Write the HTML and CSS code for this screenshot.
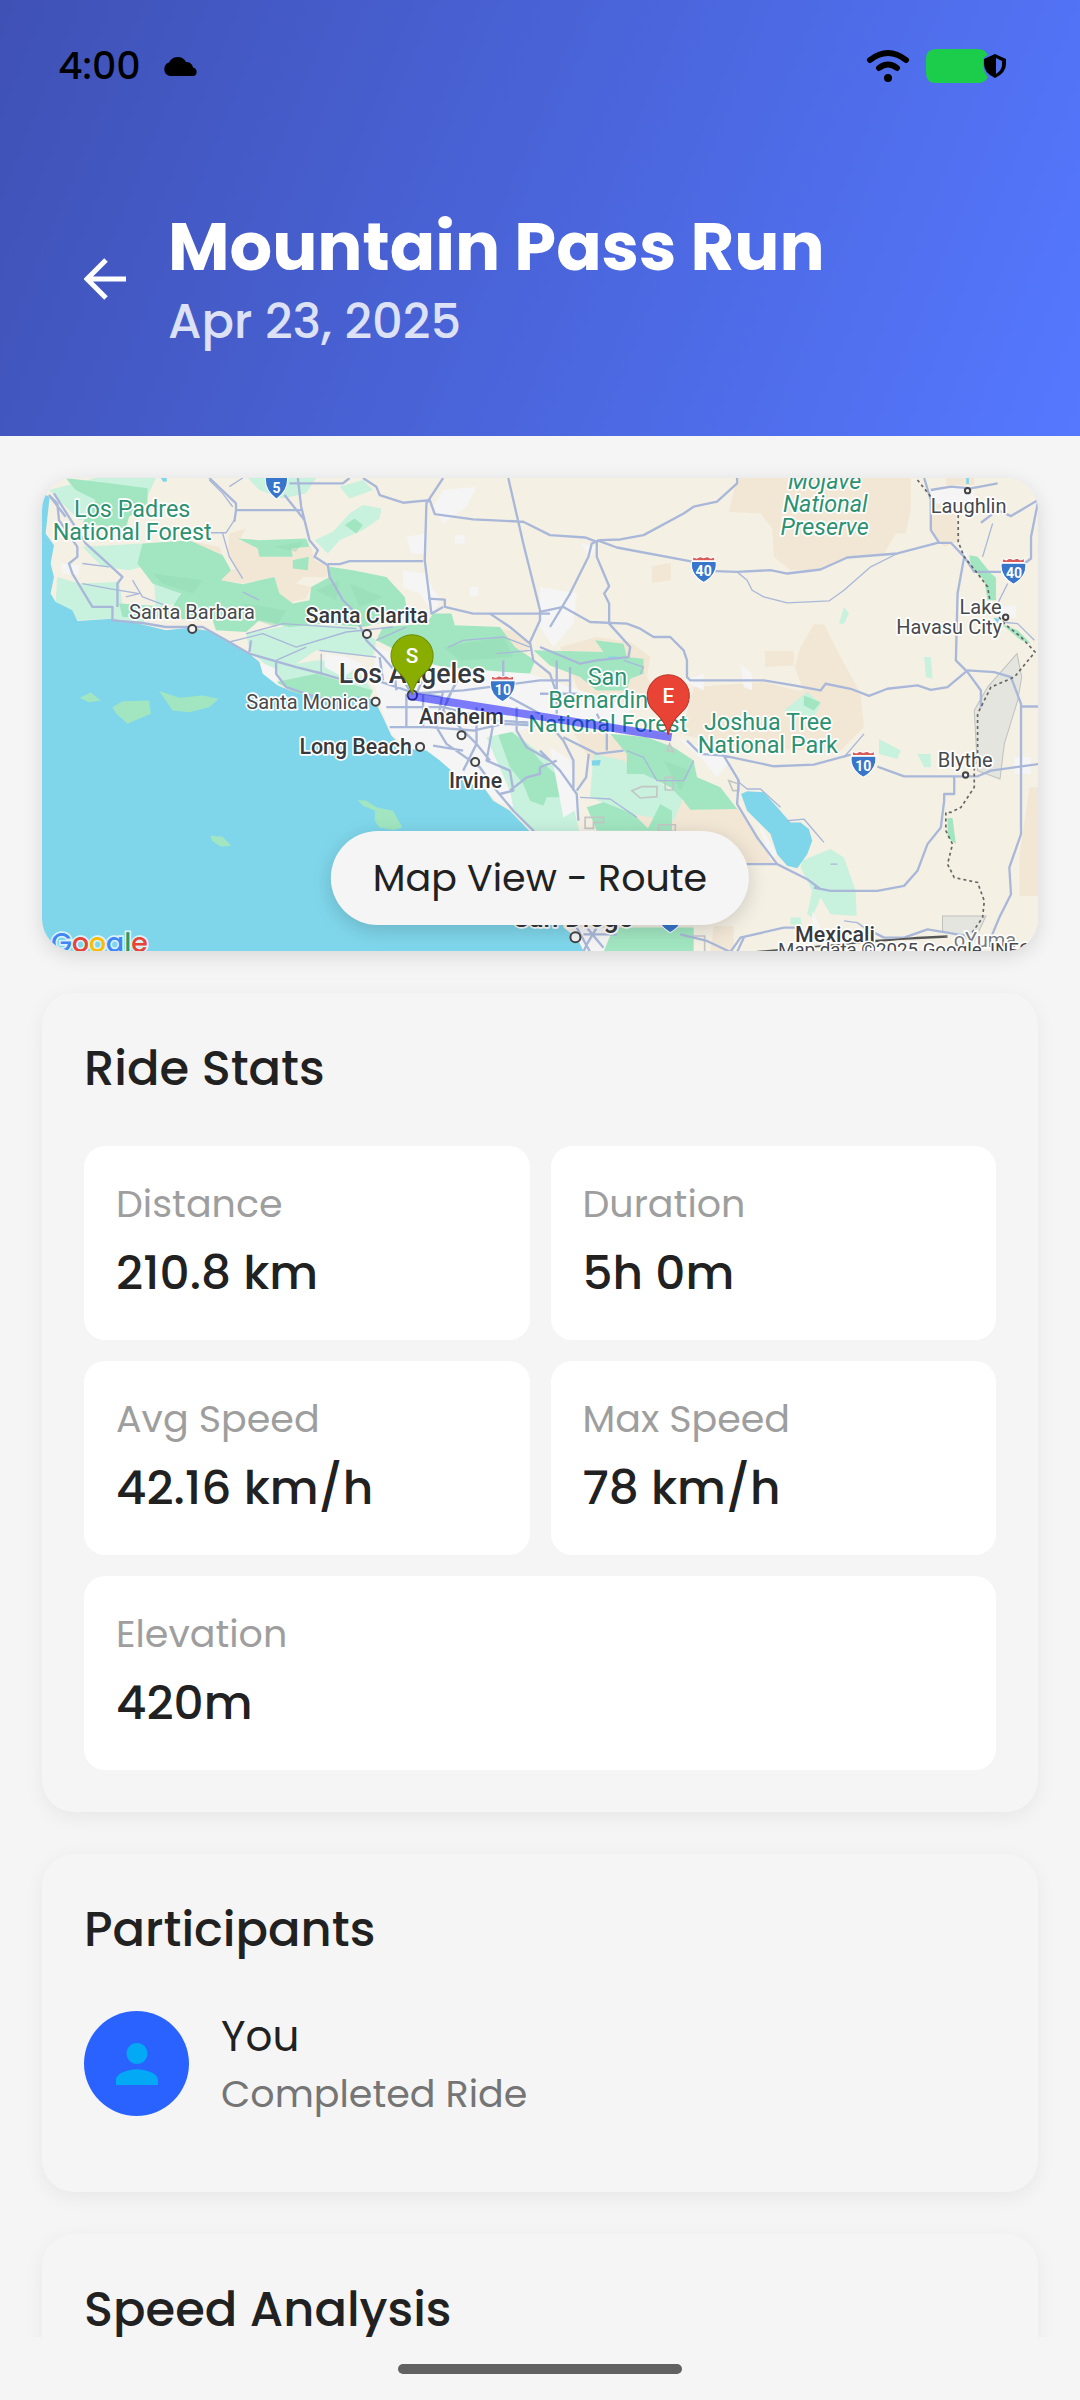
FILE: index.html
```html
<!DOCTYPE html>
<html lang="en">
<head>
<meta charset="utf-8">
<meta name="viewport" content="width=device-width, initial-scale=1">
<title>Mountain Pass Run</title>
<link rel="stylesheet" href="styles.css">
</head>
<body>
<header class="hero">
  <div class="status">
    <div class="status-side">
      <span class="clock">4:00</span>
      <svg class="cloud" viewBox="0 0 36 20" aria-hidden="true"><path d="M7 20a7 7 0 0 1-1-13.500A9.500 9.500 0 0 1 23 6a7 7 0 0 1 7 5.500a4.500 4.500 0 0 1 1 8.500z"/></svg>
    </div>
    <div class="status-side">
      <svg class="wifi" viewBox="0 0 44 34" aria-hidden="true"><path d="M4 11Q22-3 40 11M13 19Q22 12 31 19" fill="none" stroke="#000" stroke-width="6" stroke-linecap="round"/><circle cx="22" cy="29" r="4"/></svg>
      <svg class="battery" viewBox="0 0 82 34" aria-hidden="true"><path d="M10 0H52Q59 0 62 6Q57 8 57 12Q57 23 62 28Q59 34 52 34H10Q0 34 0 24V10Q0 0 10 0Z" fill="#1bcd4b"/><path d="M69 5l11 5v5q0 9-11 14q-11-5-11-14V10z"/><path d="M70 9l6 3v4q0 5-6 9z" fill="#5070ee"/></svg>
    </div>
  </div>
  <div class="titlebar">
    <button class="back" type="button" aria-label="Back"><svg viewBox="0 0 42 42" aria-hidden="true"><path d="M42 21H4M22 2L3 21L22 40" fill="none" stroke="#fff" stroke-width="5"/></svg></button>
    <div>
      <h1 class="title">Mountain Pass Run</h1>
      <p class="date">Apr 23, 2025</p>
    </div>
  </div>
</header>

<main class="content">
  <section class="map" aria-label="Route map">
    <svg class="map-canvas" viewBox="36 54 2988 1416" preserveAspectRatio="xMidYMid slice">
      <rect x="36" y="54" width="2988" height="1420" fill="#f5f0e4"/>
      <!-- desert -->
      <g fill="#f2e7d5">
        <path d="M600 220L650 205L630 240L690 260L690 290L790 290L785 265L845 260L855 300L900 320L890 352L820 350L800 370L845 380L830 415L770 430L750 400L735 350L640 370L575 360L580 340L620 325L595 280Z"/>
        <path d="M470 240L570 260L580 285L500 265ZM430 270L470 285L470 305L440 310Z"/>
        <path d="M2120 54H2640V150L2625 220H2595L2560 280L2450 292L2370 328L2280 330L2230 290L2225 205L2190 160L2095 155Z"/>
        <path d="M2695 120L2770 150L2790 240L2740 260L2700 210ZM2745 54H2830V75H2745Z"/>
        <path d="M1865 318L1922 308V360L1865 368ZM2203 572H2290V615L2203 620Z"/>
        <path d="M2350 492H2380L2430 590L2490 700L2500 800L2420 880L2340 870L2100 860L1950 820L1980 720L1990 680L2200 665L2300 690H2320L2292 620L2310 560Z"/>
        <path d="M1590 560L1700 530L1800 545L1860 590L1850 650L1880 700L1800 740L1650 700Z"/>
        <path d="M1890 1000L1960 1020L2120 1040L2180 1120L2230 1210H1800V1040ZM2995 980H3024V1305H2966V1180ZM2050 1395H2110V1473H2040Z"/>
        <path d="M1620 800L1760 830L1860 870L1840 950L1700 930ZM1340 500L1440 510L1500 550L1490 580Z"/>
      </g>
      <!-- light vegetation -->
      <g fill="#c8f1de">
        <path d="M60 90L200 54H380L350 120L300 170L150 180ZM655 54H860L830 100L760 115L690 90ZM930 80L1000 60L1030 90L960 115Z"/>
        <path d="M160 260L340 250L340 320L300 330L220 320ZM85 350L150 370L270 365L280 430L370 450L340 490L250 475L145 480L80 425ZM375 370L450 390L450 430L380 440Z"/>
        <path d="M855 240L910 215L960 160L1000 135L1055 145L1050 175L1000 210L930 240L895 280Z"/>
        <path d="M650 520L800 490L980 500L1040 540L1030 590L930 580L860 570L800 610L740 640L660 570ZM740 620L860 600L960 600L1030 690L870 700L760 670Z"/>
        <path d="M1370 830L1430 800L1560 900L1620 1000L1650 1120L1520 1120L1440 1040L1420 950Z"/>
        <path d="M2260 750L2330 695L2370 730L2350 770ZM2425 490L2440 440L2455 460L2440 490ZM2680 590L2700 590L2705 655L2685 650ZM2545 835L2610 870L2600 895L2545 880ZM2660 880H2700L2700 920L2680 920Z"/>
        <path d="M2315 1200L2360 1180L2400 1165L2440 1190L2475 1290L2478 1365L2400 1360L2370 1310L2345 1370L2330 1360L2345 1290L2310 1220ZM2280 1370L2310 1370L2315 1395L2280 1390Z"/>
        <path d="M1690 880L1780 900L1960 1010L1930 1080L1800 1060L1680 1010Z"/>
      </g>
      <!-- forests -->
      <g fill="#a1e6c1">
        <path d="M110 54L240 70L355 85V130L300 170L290 205L160 190L200 120L140 90Z"/>
        <path d="M340 250L480 240L580 285L605 330L575 360L640 372L735 350L750 400L790 430L840 420L845 380L900 350L900 320L970 330L1070 350L1125 410L1130 440L1095 480L1000 500L880 490L780 500L690 480L650 515L560 510L550 480L280 470L270 430L430 440L455 400L370 370L325 310Z"/>
        <path d="M625 235L690 240L830 235L840 260L785 265L790 290L690 290L685 265ZM790 300L838 290L835 330L790 325ZM945 195L975 175L1000 195L980 220Z"/>
        <path d="M1060 500L1190 490L1210 460H1265L1275 495L1410 500L1455 560L1515 600L1500 640L1380 640L1240 620L1160 600L1040 540ZM740 665L860 640L1030 690L1020 712L870 715L800 700Z"/>
        <path d="M1510 570L1720 575L1695 540L1780 550L1790 590L1840 595L1840 640L1800 655L1790 690L1700 690L1650 650L1560 615Z"/>
        <path d="M1400 810H1440L1490 850L1530 900L1600 960L1625 1010L1550 1010L1540 1035L1500 1020L1480 970L1440 920Z"/>
        <path d="M1740 820L1850 830L1930 860L1990 900L2000 950L2070 980L2120 1045L1980 1047L1960 1020L1920 980L1840 940L1790 940V880Z"/>
        <path d="M1670 1040L1720 1025L1810 1060L1860 1110H1700ZM1890 1030L1925 1050V1110H1850ZM1700 1400H1990V1473H1700L1680 1430Z"/>
        <path d="M2815 285L2840 290L2880 340L2895 352V420L2870 420L2860 360L2820 320ZM2910 490L2960 510L3000 550L2970 540ZM2750 1072L2765 1072L2775 1150L2750 1130ZM2320 705L2370 725L2350 750L2320 735Z"/>
      </g>
      <g fill="#93d9b4" opacity="0.45">
        <path d="M370 340L520 360L490 400L400 370ZM640 430L770 450L740 500L650 470ZM860 390L930 360L920 420ZM1240 560L1420 530L1450 590L1290 600ZM960 370L1060 410L990 440ZM1900 900L1980 930L1950 990ZM730 260L820 245L800 275Z"/>
      </g>
      <!-- urban areas -->
      <g fill="#f5f5f5">
        <path d="M1240 90L1340 80L1310 140L1240 190L1210 140ZM1130 230L1190 220V280L1145 280ZM1120 330L1185 340L1230 420L1210 460L1170 400L1120 380ZM1320 380H1345V405L1320 410ZM1275 225H1305V250H1275Z"/>
        <path d="M1040 560L1160 600L1240 620L1500 640L1680 700L1800 740L1780 800L1560 790L1370 830L1400 900L1440 990L1450 1040L1400 1020L1365 985L1300 960L1230 900L1140 865L1085 820L1050 730L1030 650Z"/>
        <path d="M690 605L740 625L745 675L700 640ZM885 580L950 590L1000 610L940 650L885 620ZM95 310L150 315V345L100 340ZM1530 380L1640 400L1630 490L1570 560L1530 500ZM1650 250L1700 260L1680 290ZM1940 830L2100 900L2060 950L2020 900ZM1960 660L2020 640V690ZM2130 610L2165 640V690L2140 680Z"/>
        <path d="M2700 90L2830 80V130H2700ZM2780 260L2810 280L2800 320ZM2900 440L2955 435V470L2900 480ZM2950 890H3000V940H2950ZM1630 1400H1750L1720 1473H1660ZM2345 1350L2370 1400H2345ZM2180 1080L2240 1180L2220 1200ZM1560 860L1620 900L1650 1040L1600 1070Z"/>
      </g>
      <!-- water -->
      <g fill="#7fd6ea">
        <path d="M36 95L62 112L50 220L75 255L65 310L75 350L65 400L80 425L130 450L145 482L250 475L330 490L410 510L480 502L540 512L600 548L660 580L690 605L700 640L745 675L800 698L870 712L1000 708L1035 720L1060 770L1085 825L1110 850L1140 865L1190 870L1230 900L1300 960L1365 985L1390 1020L1440 1050L1500 1112L1590 1200L1600 1400L1640 1430L1662 1473H36Z"/>
        <path d="M2132 1000L2150 992L2200 995L2240 1040L2280 1085H2310L2335 1105L2345 1140L2330 1180L2300 1222L2270 1215L2240 1180L2220 1120L2150 1050Z"/>
        <path d="M1685 900L1712 898L1708 915H1685ZM395 54H412L414 64L402 66ZM2806 54H2814V72H2806ZM2888 472L2905 475L2900 490ZM1735 588H1760V596H1735Z"/>
      </g>
      <g fill="#a1e6c1">
        <path d="M152 712L185 696L215 720L180 725ZM250 740L280 722L360 720L365 760L295 790L262 760ZM390 692L450 712L520 705L568 715L540 740L480 755L430 750ZM985 1018L1010 1020L1040 1040L1090 1050L1118 1100L1090 1108L1050 1100L1035 1080L1036 1050L1000 1035ZM543 1125L580 1128L605 1155L575 1158L548 1140Z"/>
      </g>
      <path d="M2958 580L2972 650L2960 720L2920 850L2907 955L2840 930L2830 750L2870 680ZM2735 1365H2865L2830 1440L2735 1410Z" fill="#e4e5df" stroke="#bfc1bf" stroke-width="3"/>
      <g fill="none" stroke="#c4c6c6" stroke-width="5">
        <path d="M1905 950h24v38h-24zM1805 990l30-12h45v30l-50 4zM1885 1092h50v20h-50zM1665 1070h55v15h-30v18h-25zM1910 870l8-20l12 24zM2095 960l30 10v20h-18zM1985 1425h38v45"/>
      </g>
      <!-- minor roads -->
      <g class="road-minor">
        <path d="M600 80L640 54M545 218H590L615 180M580 220L600 290L640 355M640 395L690 420M160 370L240 385L330 400L290 410M160 310L240 320M310 360L340 410L420 440M600 545L700 520L800 560L950 515L1090 500"/>
        <path d="M650 520L760 490L980 505M740 600L830 560M870 570L1040 590M875 580V640L930 655M1040 540L1130 500M1255 560L1300 540L1420 530L1500 560M1400 580L1500 570"/>
        <path d="M2120 335L2150 360L2165 390L2200 410L2270 428L2395 422L2440 390L2520 320L2600 280M2930 370L2900 430M3010 540L2960 490L2910 485M2855 290L2885 190"/>
        <path d="M2270 1080L2320 1075L2350 1110L2380 1145M2120 960L2150 985H2190L2250 1040M1790 870L1840 890L1880 960L1960 960L1990 900M1650 1010L1740 1015L1820 1070M2440 1380L2480 1385L2500 1400M2400 1210H2420"/>
        <path d="M540 60L580 100L610 140M1780 600L1840 620L1830 640M2500 820L2440 890"/>
      </g>
      <!-- highways -->
      <g class="road">
        <path d="M540 54L620 130V150H815M620 150L615 185M780 70H940L960 54M765 105L825 180L840 240L865 270L855 290L895 315L900 350L940 420L970 450L1010 540L1060 590L1120 660L1147 700M805 54L815 140L840 240"/>
        <path d="M895 312H930L960 303H1180M1000 54L1040 80L1050 105L1120 128L1200 120L1215 162L1330 178L1480 185L1560 225L1665 232L1700 245M1240 54L1190 130L1185 300L1200 420L1205 460L1240 440M1195 415L1245 418V440L1330 460H1560M1435 54L1480 250L1530 450V480L1500 545L1510 600L1560 640L1580 700M1380 460L1440 500L1500 550"/>
        <path d="M60 105L85 130L90 180L145 260V290L120 310L130 340L190 440H250V480L340 488L410 500L520 500L600 545L660 580L800 620L880 640L930 655L1040 660M75 100L170 250L280 350L265 370V440M60 105L110 170M660 575L665 540M740 600V640L770 680L830 700L880 715"/>
        <path d="M1560 500L1620 400L1675 290L1685 250L1710 240L1770 238L1840 225L1960 160L1990 140L2060 125L2120 70V54M1700 240L1760 262L1990 305M2055 333L2120 335L2220 330L2270 340L2370 328L2450 292L2600 280L2720 248H2760L2800 290L2830 335H2910M2980 310L3000 295V230L3024 110"/>
        <path d="M1700 245V290L1737 378L1722 400L1737 430V490L1800 560L1795 590L1700 600L1650 610L1530 560M1530 455L1600 440L1680 485L1790 490L1830 505L1870 530H1920L1960 570L1970 600V650L1980 660H2200L2290 675L2370 690L2385 670L2460 685L2515 706L2570 685L2660 675L2700 688L2750 680L2810 630L2890 635L2940 650L2970 730V1120L2935 1220L2940 1300L2905 1370L2880 1430"/>
        <path d="M2800 290L2780 400L2775 600L2810 635L2850 690V740M2970 738H3024M2680 54L2700 120V210L2725 248M2700 90L2760 80L2820 85L2900 70M2850 188L2900 150L2940 168L3024 118"/>
        <path d="M1970 840L2010 880L2080 885L2230 917L2350 912L2460 882M2540 918L2620 947H2840L2880 930L3024 910M2770 947V1000H2740V1020L2730 1100L2690 1150L2660 1230L2620 1275L2540 1290H2400L2350 1280M2080 885L2125 960L2120 1030L2180 1130L2240 1210L2330 1255L2370 1285M2100 1210H2240"/>
        <path d="M1950 1420L2030 1440L2100 1473L2130 1430L2260 1400L2300 1400M2500 1400L2560 1430L2620 1430L2690 1405L2780 1420L2850 1430M2120 1473L2140 1430"/>
        <path d="M1147 700L1300 690L1530 660L1620 660M1040 660L1130 690L1240 710M1070 740H1240L1400 780L1560 790M1080 800H1200L1330 810L1420 790L1520 795M1130 700V800M1180 700V800M1240 690L1220 800M1280 660L1240 750L1340 850L1380 900M1220 800L1250 850L1350 920L1400 990L1450 1050L1530 1130M1210 855L1300 870M1340 740V850L1300 930M1390 790L1370 900L1440 930L1450 990L1410 1000M1460 740V810L1490 860L1560 900M1440 990L1490 950L1530 940V920L1580 900M1530 870L1590 930L1640 1000L1645 1080M1530 760L1600 840L1630 900V990M1600 830L1700 880L1780 870M1676 880L1668 950L1640 990M1700 760L1730 820V870M1580 600V760M1620 620V720M1420 600V700L1530 760M1050 590L1060 660M1090 590L1100 690M1300 630L1250 720M1200 610L1160 700M1530 700H1640L1700 720"/>
        <path d="M1640 1400L1680 1473M1670 1400L1720 1460M1700 1400L1670 1450L1660 1473M1660 1420H1760"/>
      </g>
      <path d="M2660 60L2700 110M2782 165V245L2800 290L2840 340L2870 380L2880 440L2920 490L2970 530L3012 575L2950 650L2880 680L2840 760V880L2830 920V980L2790 1040L2760 1055H2745L2745 1110L2765 1150L2750 1210L2770 1250L2840 1265L2860 1320L2855 1370L2820 1420" fill="none" stroke="#666" stroke-width="5" stroke-dasharray="9 9"/>
      <path d="M2170 1473L2660 1430L2750 1425M2500 1440L2750 1428" fill="none" stroke="#555" stroke-width="5"/>
      <!-- place names -->
      <g class="place">
        <g fill="#f5f5f5" stroke="#444" stroke-width="6"><circle cx="489" cy="506" r="12"/><circle cx="1012" cy="521" r="12"/><circle cx="1038" cy="724" r="12"/><circle cx="1148" cy="704" r="14"/><circle cx="1295" cy="824" r="12"/><circle cx="1171" cy="859" r="12"/><circle cx="1336" cy="904" r="12"/><circle cx="2810" cy="92" r="8"/><circle cx="2924" cy="471" r="8"/><circle cx="2804" cy="943" r="8"/><circle cx="1636" cy="1429" r="15"/></g>
        <text class="park" x="309" y="172">Los Padres</text>
        <text class="park" x="309" y="241">National Forest</text>
        <text class="park" x="1732" y="673">San</text>
        <text class="park" x="1724" y="742">Bernardino</text>
        <text class="park" x="1733" y="814">National Forest</text>
        <text class="park" x="2212" y="808">Joshua Tree</text>
        <text class="park" x="2212" y="877">National Park</text>
        <text class="park italic" x="2382" y="87">Mojave</text>
        <text class="park italic" x="2384" y="156">National</text>
        <text class="park italic" x="2382" y="225">Preserve</text>
        <text class="town" x="488" y="477">Santa Barbara</text>
        <text class="town strong" x="1012" y="488">Santa Clarita</text>
        <text class="city" x="1147" y="667">Los Angeles</text>
        <text class="town" x="834" y="746">Santa Monica</text>
        <text class="town strong" x="1295" y="791">Anaheim</text>
        <text class="town strong" x="978" y="881">Long Beach</text>
        <text class="town strong" x="1337" y="981">Irvine</text>
        <text class="town" x="2813" y="158">Laughlin</text>
        <text class="town" x="2849" y="461">Lake</text>
        <text class="town" x="2755" y="520">Havasu City</text>
        <text class="town" x="2803" y="918">Blythe</text>
        <text class="city" x="1630" y="1399">San Diego</text>
        <text class="town strong" x="2413" y="1444">Mexicali</text>
        <text class="town faint" x="2862" y="1458">oYuma</text>
        <text class="credit" x="2630" y="1486">Map data ©2025 Google, INEGI</text>
      </g>
      <!-- interstate shields -->
      <g class="shields">
        <g><path d="M708 50H774Q778 90 741 117Q704 90 708 50Z"/><text x="741" y="98">5</text></g>
        <g><path d="M1382 661H1455Q1460 700 1418 724Q1376 700 1382 661Z"/><path class="crest" d="M1385 647l12 4l10-5l11 4l11-4l10 5l12-4v12h-66z"/><text x="1419" y="705">10</text></g>
        <g><path d="M1984 304H2057Q2062 343 2020 367Q1978 343 1984 304Z"/><path class="crest" d="M1987 290l12 4l10-5l11 4l11-4l10 5l12-4v12h-66z"/><text x="2020" y="348">40</text></g>
        <g><path d="M2911 309H2984Q2989 348 2947 372Q2905 348 2911 309Z"/><path class="crest" d="M2914 295l12 4l10-5l11 4l11-4l10 5l12-4v12h-66z"/><text x="2949" y="353">40</text></g>
        <g><path d="M2462 887H2535Q2540 926 2498 950Q2456 926 2462 887Z"/><path class="crest" d="M2465 873l12 4l10-5l11 4l11-4l10 5l12-4v12h-66z"/><text x="2498" y="931">10</text></g>
        <path d="M1884 1352H1957Q1962 1391 1920 1415Q1878 1391 1884 1352Z"/>
      </g>
      <!-- route and its ends -->
      <path d="M1148 707L1912 828" fill="none" stroke="#00f" stroke-opacity="0.5" stroke-width="24" stroke-linecap="square"/>
      <g class="pins">
        <path d="M1147 703Q1140 665 1107 635A63 63 0 1 1 1187 635Q1154 665 1147 703Z" fill="#8aae00" stroke="#6e8d00" stroke-width="3"/><text x="1147" y="607">S</text>
        <path d="M1914 823Q1907 785 1874 755A63 63 0 1 1 1954 755Q1921 785 1914 823Z" fill="#e94335" stroke="#bd3026" stroke-width="3"/><text x="1914" y="728">E</text>
      </g>
      <text class="logo" x="67" y="1474"><tspan fill="#4285f4">G</tspan><tspan fill="#e94335">o</tspan><tspan fill="#fbbc05">o</tspan><tspan fill="#4285f4">g</tspan><tspan fill="#2c9a68">l</tspan><tspan fill="#e94335">e</tspan></text>
    </svg>
    <span class="map-label">Map View - Route</span>
  </section>

  <section class="card">
    <h2 class="card-title">Ride Stats</h2>
    <dl class="stats">
      <div class="stat"><dt>Distance</dt><dd>210.8 km</dd></div>
      <div class="stat"><dt>Duration</dt><dd>5h 0m</dd></div>
      <div class="stat"><dt>Avg Speed</dt><dd>42.16 km/h</dd></div>
      <div class="stat"><dt>Max Speed</dt><dd>78 km/h</dd></div>
      <div class="stat wide"><dt>Elevation</dt><dd>420m</dd></div>
    </dl>
  </section>

  <section class="card">
    <h2 class="card-title">Participants</h2>
    <div class="person">
      <span class="avatar"><svg viewBox="4 4 16 16" aria-hidden="true"><path d="M12 12c2.210 0 4-1.790 4-4s-1.790-4-4-4-4 1.790-4 4 1.790 4 4 4zm0 2c-2.670 0-8 1.340-8 4v2h16v-2c0-2.660-5.330-4-8-4z"/></svg></span>
      <div>
        <p class="name">You</p>
        <p class="state">Completed Ride</p>
      </div>
    </div>
  </section>

  <section class="card">
    <h2 class="card-title">Speed Analysis</h2>
  </section>
</main>

<footer class="navbar"><span class="handle"></span></footer>
</body>
</html>
```
FILE: styles.css
```css
* { box-sizing: border-box; margin: 0; padding: 0; }

body {
  display: flex;
  flex-direction: column;
  height: 100vh;
  overflow: hidden;
  background: #f5f5f5;
  color: #212121;
  font-family: "Poppins", "Inter", sans-serif;
}

/* header */
.hero {
  flex: none;
  padding-bottom: 82px;
  background: linear-gradient(112deg, #3f51b5, #5578ff);
}
.status {
  display: flex;
  justify-content: space-between;
  align-items: center;
  height: 132px;
  padding: 0 72px 0 58px;
}
.status-side { display: flex; align-items: center; gap: 16px; }
.status-side:first-child { gap: 22px; }
.clock { color: #000; font-size: 38px; line-height: 40px; font-weight: 500; }
.cloud { width: 36px; height: 20px; }
.wifi { width: 44px; height: 34px; }
.battery { width: 82px; height: 34px; }
.titlebar {
  display: flex;
  align-items: center;
  gap: 42px;
  padding: 72px 84px 0;
}
.back { width: 42px; height: 42px; border: 0; background: none; }
.back svg { display: block; width: 42px; height: 42px; }
.title { color: #fff; font-size: 67px; line-height: 85px; font-weight: 700; }
.date { color: #dce1f6; font-size: 48px; line-height: 65px; font-weight: 500; }

/* scrolling content */
.content {
  flex: 1;
  min-height: 0;
  overflow: hidden;
  display: flex;
  flex-direction: column;
  gap: 42px;
  padding: 42px 42px 0;
}
.content > * { flex: none; }

/* map */
.map {
  position: relative;
  height: 473px;
  border-radius: 32px;
  overflow: hidden;
  box-shadow: 0 5px 20px rgba(0, 0, 0, 0.12);
}
.map-canvas { display: block; width: 100%; height: 100%; }
.map-label {
  position: absolute;
  left: 50%;
  bottom: 26px;
  transform: translateX(-50%);
  padding: 20px 42px;
  border-radius: 47px;
  background: #f5f5f5;
  box-shadow: 0 5px 20px rgba(0, 0, 0, 0.16);
  font-size: 38px;
  line-height: 54px;
  white-space: nowrap;
}
.road, .road-minor { fill: none; stroke: #a9b8d9; stroke-linejoin: round; }
.road { stroke-width: 7px; }
.road-minor { stroke-width: 4px; }
.map text { font-family: Roboto, sans-serif; text-anchor: middle; }
.place text { fill: #46494d; stroke: #fff; stroke-width: 10px; stroke-linejoin: round; paint-order: stroke; }
.place .park { fill: #2c9170; font-size: 70px; }
.place .italic { font-style: italic; }
.place .town { font-size: 60px; }
.place .strong { fill: #36393d; font-size: 64px; font-weight: 500; }
.place .faint { fill: #77797c; }
.place .city { fill: #36393d; font-size: 80px; font-weight: 500; }
.place .credit { font-size: 56px; }
.shields path { fill: #3876cb; stroke: #fff; stroke-width: 3px; }
.shields .crest { fill: #d95c5c; }
.shields text { fill: #fff; font-size: 42px; font-weight: 700; }
.pins text { fill: #fff; font-size: 62px; font-weight: 500; }
.map .logo { font-family: Poppins, sans-serif; font-size: 80px; font-weight: 500; text-anchor: start; stroke: #d9f2fa; stroke-width: 10px; paint-order: stroke; }

/* cards */
.card {
  padding: 42px;
  border-radius: 32px;
  background: #f5f5f5;
  box-shadow: 0 5px 20px rgba(0, 0, 0, 0.06);
}
.card-title { margin-bottom: 44px; font-size: 48px; line-height: 67px; font-weight: 500; }
.stats { display: grid; grid-template-columns: 1fr 1fr; gap: 21px; }
.stat { padding: 32px; border-radius: 21px; background: #fff; }
.stat dt { margin-bottom: 8px; color: #9e9e9e; font-size: 38px; line-height: 52px; }
.stat dd { font-size: 47px; line-height: 70px; font-weight: 500; }
.wide { grid-column: 1 / -1; }

.person { display: flex; align-items: center; gap: 32px; padding-bottom: 30px; }
.avatar {
  display: grid;
  place-items: center;
  width: 105px;
  height: 105px;
  border-radius: 50%;
  background: #2962ff;
}
.avatar svg { width: 42px; height: 42px; fill: #03a9f4; }
.name { font-size: 42px; line-height: 60px; }
.state { color: #757575; font-size: 38px; line-height: 53px; }

/* gesture bar */
.navbar { flex: none; display: grid; place-items: center; height: 63px; }
.handle { width: 284px; height: 10px; border-radius: 5px; background: #616161; }
```
